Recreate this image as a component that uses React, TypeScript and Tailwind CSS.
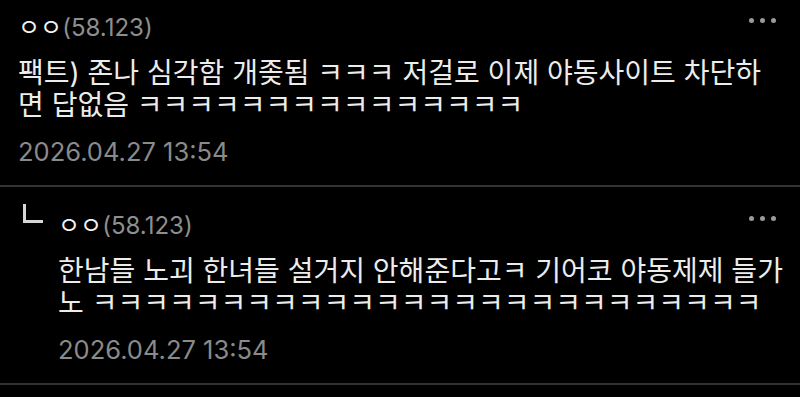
import React from "react";

type Comment = {
  reply?: boolean;
  ip: string;
  lines: string[];
  date: string;
};

const comments: Comment[] = [
  {
    ip: "(58.123)",
    lines: [
      "팩트) 존나 심각함 개좆됨 ㅋㅋㅋ 저걸로 이제 야동사이트 차단하",
      "면 답없음 ㅋㅋㅋㅋㅋㅋㅋㅋㅋㅋㅋㅋㅋㅋㅋ",
    ],
    date: "2026.04.27 13:54",
  },
  {
    reply: true,
    ip: "(58.123)",
    lines: [
      "한남들 노괴 한녀들 설거지 안해준다고ㅋ 기어코 야동제제 들가",
      "노 ㅋㅋㅋㅋㅋㅋㅋㅋㅋㅋㅋㅋㅋㅋㅋㅋㅋㅋㅋㅋㅋㅋㅋㅋㅋㅋ",
    ],
    date: "2026.04.27 13:54",
  },
];

function Dots() {
  return (
    <div className="flex h-[20px] items-center gap-[6px] mr-[12px] shrink-0">
      <span className="block h-[5px] w-[5px] rounded-full bg-[#9a9a9a]" />
      <span className="block h-[5px] w-[5px] rounded-full bg-[#9a9a9a]" />
      <span className="block h-[5px] w-[5px] rounded-full bg-[#9a9a9a]" />
    </div>
  );
}

function CommentItem({ c, first }: { c: Comment; first: boolean }) {
  return (
    <div className={first ? "pt-[10px]" : "pt-[21px]"}>
      <div className="flex pl-[18px] pr-[12px]">
        {c.reply ? (
          <div className="w-[40px] shrink-0 -mt-[4px] pl-[5px]">
            <div className="h-[19px] w-[20px] border-l-[3px] border-b-[3px] border-[#d6d6d6]" />
          </div>
        ) : null}
        <div className="flex-1 min-w-0">
          <div className="flex items-start justify-between">
            <div
              className="h-[32px] leading-[32px] text-[24px] whitespace-nowrap"
              style={{ fontFamily: "Inter, 'Noto Sans CJK KR', sans-serif" }}
            >
              <span className="text-[#f2f2f2]" style={{ fontFamily: "'Noto Sans CJK KR', sans-serif" }}>ㅇㅇ</span>
              <span className="text-[#8e8e8e]">{c.ip}</span>
            </div>
            <Dots />
          </div>
          <p
            className="mt-[15px] text-[28px] leading-[32px] text-[#ececec] whitespace-nowrap"
            style={{ fontFamily: "Inter, 'Noto Sans CJK KR', sans-serif" }}
          >
            {c.lines.map((l, i) => (
              <React.Fragment key={i}>
                {i > 0 ? <br /> : null}
                {l}
              </React.Fragment>
            ))}
          </p>
          <div
            className="mt-[15px] h-[32px] leading-[32px] text-[25.5px] text-[#8a8a8a]"
            style={{ fontFamily: "Inter, 'Noto Sans CJK KR', sans-serif" }}
          >
            {c.date}
          </div>
        </div>
      </div>
      <div className="mt-[17px] h-[2px] bg-[#333333]" />
    </div>
  );
}

export default function App() {
  return (
    <div className="min-h-[397px] w-[800px] bg-black overflow-hidden">
      {comments.map((c, i) => (
        <CommentItem key={i} c={c} first={i === 0} />
      ))}
    </div>
  );
}
